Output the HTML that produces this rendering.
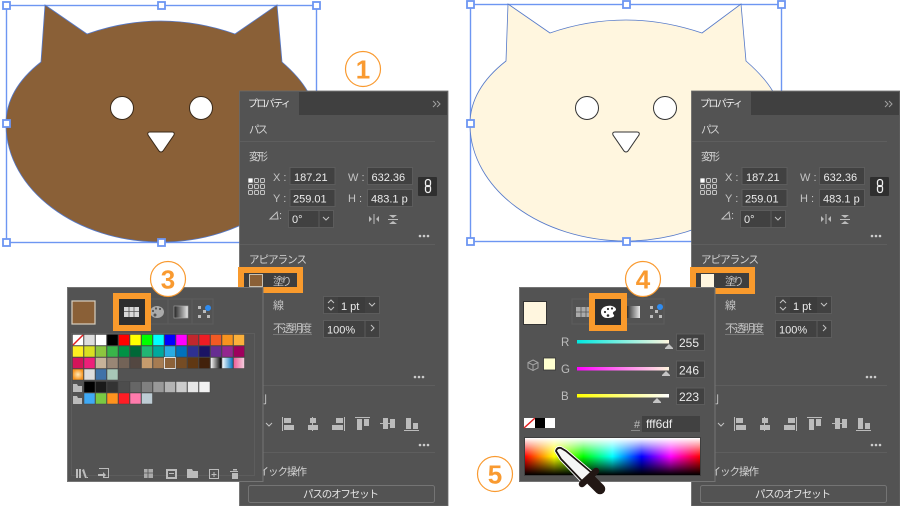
<!DOCTYPE html>
<html lang="ja">
<head>
<meta charset="utf-8">
<title>Illustrator</title>
<style>
html,body{margin:0;padding:0;background:#fff;width:900px;height:506px;overflow:hidden}
svg{display:block;filter:blur(.3px)}
text{font-family:"Liberation Sans","Noto Sans CJK JP",sans-serif}
.h{font-size:10.5px;fill:#d4d4d4}
.l{font-size:11px;fill:#c4c4c4}
.v{font-size:11px;fill:#ececec}
.f{fill:#414141;stroke:#5c5c5c;stroke-width:1}
.ic{fill:#bbb}
.st{fill:none;stroke:#c4c4c4;stroke-width:1}
.n{font-size:26px;font-weight:bold;fill:#f99a30;text-anchor:middle}
.ci{fill:#fff;stroke:#f99a30;stroke-width:1.2}
.sep{stroke:#5e5e5e;stroke-width:1}
</style>
</head>
<body>
<svg width="900" height="506" viewBox="0 0 900 506" xmlns="http://www.w3.org/2000/svg">
<defs>
<linearGradient id="hue"><stop offset="0" stop-color="#f00"/><stop offset=".167" stop-color="#ff0"/><stop offset=".333" stop-color="#0f0"/><stop offset=".5" stop-color="#0ff"/><stop offset=".667" stop-color="#00f"/><stop offset=".833" stop-color="#f0f"/><stop offset="1" stop-color="#f00"/></linearGradient>
<linearGradient id="wb" x2="0" y2="1"><stop offset="0" stop-color="#fff"/><stop offset=".5" stop-color="#fff" stop-opacity="0"/><stop offset=".5" stop-color="#000" stop-opacity="0"/><stop offset="1" stop-color="#000"/></linearGradient>
<linearGradient id="bw"><stop offset="0" stop-color="#fff"/><stop offset="1" stop-color="#000"/></linearGradient>
<linearGradient id="gb"><stop offset="0" stop-color="#222"/><stop offset="1" stop-color="#e8e8e8"/></linearGradient>
<linearGradient id="bl"><stop offset="0" stop-color="#fff"/><stop offset="1" stop-color="#0071bc"/></linearGradient>
<linearGradient id="pk"><stop offset="0" stop-color="#ed5d98"/><stop offset="1" stop-color="#f5d0e0"/></linearGradient>
<radialGradient id="og"><stop offset="0" stop-color="#ffe9b8"/><stop offset="1" stop-color="#f7931e"/></radialGradient>
<linearGradient id="r"><stop offset="0" stop-color="#00e8e0"/><stop offset="1" stop-color="#fff6df"/></linearGradient>
<linearGradient id="g"><stop offset="0" stop-color="#f0f"/><stop offset="1" stop-color="#fff6df"/></linearGradient>
<linearGradient id="b"><stop offset="0" stop-color="#ff0"/><stop offset="1" stop-color="#fff"/></linearGradient>
</defs>

<!-- LEFT CAT -->
<rect x="6.5" y="5.5" width="310" height="237" fill="none" stroke="#6d96f2" stroke-width="1.4"/>
<path d="M45 5 L87 34 Q124 21 161 21 Q198 21 235 34 L277 5 L282 62 C305 82 316 100 316 124 C316 190 245 242 161 242 C77 242 6 190 6 124 C6 100 18 80 41 62 Z" fill="#8a6037" stroke="#5579c9" stroke-width=".8"/>
<circle cx="122" cy="108" r="11.5" fill="#fff" stroke="#3a2a1a"/>
<circle cx="201" cy="108" r="11.5" fill="#fff" stroke="#3a2a1a"/>
<path d="M150 132 H172 Q175 132 174 135 L163 151 Q161 153 159 151 L148 135 Q147 132 150 132Z" fill="#fff" stroke="#3a2a1a"/>
<g fill="#fff" stroke="#6d96f2" stroke-width="1.8">
<rect x="3" y="2" width="7" height="7"/><rect x="158" y="2" width="7" height="7"/><rect x="313" y="2" width="7" height="7"/>
<rect x="3" y="120" width="7" height="7"/><rect x="3" y="239" width="7" height="7"/><rect x="158" y="239" width="7" height="7"/>
</g>

<!-- RIGHT CAT -->
<rect x="470.5" y="4.5" width="311" height="237" fill="none" stroke="#6d96f2" stroke-width="1.4"/>
<path d="M508 4 L550 33 Q587 20 626 20 Q663 20 702 33 L741 4 L746 61 C769 81 782 100 782 124 C782 190 710 241 626 241 C542 241 470 190 470 124 C470 100 483 79 506 61 Z" fill="#fff6df" stroke="#5579c9" stroke-width=".8"/>
<circle cx="587" cy="108" r="11.5" fill="#fff" stroke="#333"/>
<circle cx="665" cy="108" r="11.5" fill="#fff" stroke="#333"/>
<path d="M615 132 H637 Q640 132 639 135 L628 151 Q626 153 624 151 L613 135 Q612 132 615 132Z" fill="#fff" stroke="#333"/>
<g fill="#fff" stroke="#6d96f2" stroke-width="1.8">
<rect x="467" y="1" width="7" height="7"/><rect x="623" y="1" width="7" height="7"/><rect x="778" y="1" width="7" height="7"/>
<rect x="467" y="120" width="7" height="7"/><rect x="467" y="238" width="7" height="7"/><rect x="623" y="238" width="7" height="7"/>
</g>

<!-- LEFT PROPERTIES PANEL -->
<g>
<rect x="239.500" y="91" width="208.500" height="415" fill="#535353" stroke="#6a6a6a" stroke-width=".8"/>
<rect x="240" y="92" width="207" height="23" fill="#404040"/>
<rect x="240" y="92" width="59" height="23" fill="#535353"/>
<text x="248" y="107" font-size="10" fill="#f0f0f0" textLength="43">プロパティ</text>
<path d="M433 101 l3 3 l-3 3 M437 101 l3 3 l-3 3" fill="none" stroke="#a0a0a0"/>
<text x="249" y="133" class="h" textLength="19">パス</text>
<line x1="240" y1="141.500" x2="435" y2="141.500" class="sep"/>
<text x="249" y="160" class="h" textLength="19">変形</text>
<g class="st" stroke-width=".9"><rect x="248.500" y="178.500" width="4" height="4" rx="1" fill="#fff"/><rect x="254.500" y="178.500" width="4" height="4" rx="1"/><rect x="260.500" y="178.500" width="4" height="4" rx="1"/><rect x="248.500" y="184.500" width="4" height="4" rx="1"/><rect x="254.500" y="184.500" width="4" height="4" rx="1"/><rect x="260.500" y="184.500" width="4" height="4" rx="1"/><rect x="248.500" y="190.500" width="4" height="4" rx="1"/><rect x="254.500" y="190.500" width="4" height="4" rx="1"/><rect x="260.500" y="190.500" width="4" height="4" rx="1"/></g>
<text x="273" y="181" class="l">X :</text>
<rect x="290" y="167.500" width="45" height="17" class="f"/><text x="294" y="181" class="v">187.21</text>
<text x="348" y="181" class="l">W :</text>
<rect x="367.500" y="167.500" width="45" height="17" class="f"/><text x="371.500" y="181" class="v">632.36</text>
<rect x="418" y="177" width="19" height="19" rx="1" fill="#2f2f2f"/>
<path d="M425.500 182a2.500 2.500 0 0 1 5 0v2a2.500 2.500 0 0 1-5 0zM425.500 188a2.500 2.500 0 0 1 5 0v2a2.500 2.500 0 0 1-5 0z" fill="none" stroke="#eee" stroke-width="1.300"/>
<text x="273" y="202" class="l">Y :</text>
<rect x="290" y="189.500" width="45" height="17" class="f"/><text x="293" y="202.500" class="v">259.01</text>
<text x="348" y="202" class="l">H :</text>
<rect x="367.500" y="189.500" width="45" height="17" class="f"/><text x="371" y="202.500" class="v">483.1 p</text>
<path d="M270 219 L277 212 L278 219 Z" class="st"/><text x="279" y="219" class="l" font-size="9">:</text>
<rect x="288.500" y="210.500" width="45" height="17" class="f"/><line x1="319" y1="211" x2="319" y2="227" stroke="#5c5c5c"/>
<text x="292" y="223" class="v">0°</text><path d="M323 217 l3 3 l3-3" class="st"/>
<path d="M369 216 l3 3 l-3 3z M379 216 l-3 3 l3 3z" fill="#bbb"/><line x1="374" y1="214" x2="374" y2="224" stroke="#bbb"/>
<path d="M389 215 h8 l-4 3z M389 224 h8 l-4-3z" fill="#bbb"/><line x1="388" y1="219.500" x2="398" y2="219.500" stroke="#bbb"/>
<g fill="#ccc"><circle cx="420" cy="236" r="1.300"/><circle cx="424" cy="236" r="1.300"/><circle cx="428" cy="236" r="1.300"/></g>
<line x1="240" y1="244.500" x2="435" y2="244.500" class="sep"/>
<text x="249" y="263" class="h" textLength="58">アピアランス</text>
<rect x="241" y="270" width="59" height="20" fill="none" stroke="#f99a2c" stroke-width="6"/>
<rect x="244" y="273" width="53" height="14" fill="#3e3e3e"/>
<rect x="249.500" y="274.500" width="13" height="12" fill="#8a6037" stroke="#c9c0b0"/>
<text x="273" y="285" class="l" font-size="10.500" textLength="19">塗り</text>
<path d="M249 298 h8 M249 301 h8" class="st"/>
<text x="273" y="309" class="l" font-size="10">線</text>
<rect x="323.500" y="296.500" width="56" height="17" class="f"/><rect x="338" y="297" width="27" height="16" fill="#3c3c3c"/>
<path d="M328 303 l3-3 l3 3 M328 307 l3 3 l3-3" class="st"/><text x="341" y="310" class="v">1 pt</text><path d="M369 303 l3 3 l3-3" class="st"/>
<text x="273" y="332" class="l" font-size="10" textLength="39">不透明度</text><line x1="273" y1="334.500" x2="312" y2="334.500" stroke="#777"/>
<rect x="323.500" y="320.500" width="56" height="17" class="f"/><line x1="365" y1="321" x2="365" y2="337" stroke="#5c5c5c"/>
<text x="327" y="333.500" class="v">100%</text><path d="M371 325 l3 3 l-3 3" class="st"/>
<g fill="#ccc"><circle cx="415" cy="377" r="1.300"/><circle cx="419" cy="377" r="1.300"/><circle cx="423" cy="377" r="1.300"/></g>
<line x1="240" y1="385.500" x2="435" y2="385.500" class="sep"/>
<text x="249" y="403" class="h" textLength="18">整列</text>
<path d="M266 423 l3 3 l3-3" class="st"/>
<g fill="#bbb">
<rect x="282" y="417" width="1" height="14"/><rect x="284" y="418" width="7" height="5"/><rect x="284" y="425" width="10" height="5"/>
<rect x="312" y="417" width="1" height="14"/><rect x="310" y="418" width="6" height="5"/><rect x="308" y="425" width="10" height="5"/>
<rect x="344" y="417" width="1" height="14"/><rect x="336" y="418" width="7" height="5"/><rect x="332" y="425" width="11" height="5"/>
<rect x="355" y="417" width="15" height="1"/><rect x="357" y="419" width="5" height="11"/><rect x="364" y="419" width="5" height="7"/>
<rect x="380" y="423" width="15" height="1"/><rect x="383" y="418" width="5" height="11"/><rect x="390" y="419" width="5" height="9"/>
<rect x="404" y="430" width="15" height="1"/><rect x="406" y="418" width="5" height="11"/><rect x="413" y="423" width="5" height="6"/>
</g>
<g fill="#ccc"><circle cx="420" cy="445" r="1.300"/><circle cx="424" cy="445" r="1.300"/><circle cx="428" cy="445" r="1.300"/></g>
<line x1="240" y1="452.500" x2="435" y2="452.500" class="sep"/>
<text x="249" y="475" class="h" textLength="58">クイック操作</text>
<rect x="248.500" y="485.500" width="186" height="17" rx="2" fill="#535353" stroke="#747474"/>
<text x="303" y="497.500" font-size="10.500" fill="#e4e4e4" textLength="76">パスのオフセット</text>
</g>

<!-- RIGHT PROPERTIES PANEL -->
<g transform="translate(452,0)">
<rect x="239.500" y="91" width="208.500" height="415" fill="#535353" stroke="#6a6a6a" stroke-width=".8"/>
<rect x="240" y="92" width="207" height="23" fill="#404040"/>
<rect x="240" y="92" width="59" height="23" fill="#535353"/>
<text x="248" y="107" font-size="10" fill="#f0f0f0" textLength="43">プロパティ</text>
<path d="M433 101 l3 3 l-3 3 M437 101 l3 3 l-3 3" fill="none" stroke="#a0a0a0"/>
<text x="249" y="133" class="h" textLength="19">パス</text>
<line x1="240" y1="141.500" x2="435" y2="141.500" class="sep"/>
<text x="249" y="160" class="h" textLength="19">変形</text>
<g class="st" stroke-width=".9"><rect x="248.500" y="178.500" width="4" height="4" rx="1" fill="#fff"/><rect x="254.500" y="178.500" width="4" height="4" rx="1"/><rect x="260.500" y="178.500" width="4" height="4" rx="1"/><rect x="248.500" y="184.500" width="4" height="4" rx="1"/><rect x="254.500" y="184.500" width="4" height="4" rx="1"/><rect x="260.500" y="184.500" width="4" height="4" rx="1"/><rect x="248.500" y="190.500" width="4" height="4" rx="1"/><rect x="254.500" y="190.500" width="4" height="4" rx="1"/><rect x="260.500" y="190.500" width="4" height="4" rx="1"/></g>
<text x="273" y="181" class="l">X :</text>
<rect x="290" y="167.500" width="45" height="17" class="f"/><text x="294" y="181" class="v">187.21</text>
<text x="348" y="181" class="l">W :</text>
<rect x="367.500" y="167.500" width="45" height="17" class="f"/><text x="371.500" y="181" class="v">632.36</text>
<rect x="418" y="177" width="19" height="19" rx="1" fill="#2f2f2f"/>
<path d="M425.500 182a2.500 2.500 0 0 1 5 0v2a2.500 2.500 0 0 1-5 0zM425.500 188a2.500 2.500 0 0 1 5 0v2a2.500 2.500 0 0 1-5 0z" fill="none" stroke="#eee" stroke-width="1.300"/>
<text x="273" y="202" class="l">Y :</text>
<rect x="290" y="189.500" width="45" height="17" class="f"/><text x="293" y="202.500" class="v">259.01</text>
<text x="348" y="202" class="l">H :</text>
<rect x="367.500" y="189.500" width="45" height="17" class="f"/><text x="371" y="202.500" class="v">483.1 p</text>
<path d="M270 219 L277 212 L278 219 Z" class="st"/><text x="279" y="219" class="l" font-size="9">:</text>
<rect x="288.500" y="210.500" width="45" height="17" class="f"/><line x1="319" y1="211" x2="319" y2="227" stroke="#5c5c5c"/>
<text x="292" y="223" class="v">0°</text><path d="M323 217 l3 3 l3-3" class="st"/>
<path d="M369 216 l3 3 l-3 3z M379 216 l-3 3 l3 3z" fill="#bbb"/><line x1="374" y1="214" x2="374" y2="224" stroke="#bbb"/>
<path d="M389 215 h8 l-4 3z M389 224 h8 l-4-3z" fill="#bbb"/><line x1="388" y1="219.500" x2="398" y2="219.500" stroke="#bbb"/>
<g fill="#ccc"><circle cx="420" cy="236" r="1.300"/><circle cx="424" cy="236" r="1.300"/><circle cx="428" cy="236" r="1.300"/></g>
<line x1="240" y1="244.500" x2="435" y2="244.500" class="sep"/>
<text x="249" y="263" class="h" textLength="58">アピアランス</text>
<rect x="241" y="270" width="59" height="21" fill="none" stroke="#f99a2c" stroke-width="6"/>
<rect x="244" y="273" width="53" height="15" fill="#3e3e3e"/>
<rect x="249" y="274" width="13" height="13" fill="#fff6df"/>
<text x="273" y="285" class="l" font-size="10.500" textLength="19">塗り</text>
<path d="M249 298 h8 M249 301 h8" class="st"/>
<text x="273" y="309" class="l" font-size="10">線</text>
<rect x="323.500" y="296.500" width="56" height="17" class="f"/><rect x="338" y="297" width="27" height="16" fill="#3c3c3c"/>
<path d="M328 303 l3-3 l3 3 M328 307 l3 3 l3-3" class="st"/><text x="341" y="310" class="v">1 pt</text><path d="M369 303 l3 3 l3-3" class="st"/>
<text x="273" y="332" class="l" font-size="10" textLength="39">不透明度</text><line x1="273" y1="334.500" x2="312" y2="334.500" stroke="#777"/>
<rect x="323.500" y="320.500" width="56" height="17" class="f"/><line x1="365" y1="321" x2="365" y2="337" stroke="#5c5c5c"/>
<text x="327" y="333.500" class="v">100%</text><path d="M371 325 l3 3 l-3 3" class="st"/>
<g fill="#ccc"><circle cx="415" cy="377" r="1.300"/><circle cx="419" cy="377" r="1.300"/><circle cx="423" cy="377" r="1.300"/></g>
<line x1="240" y1="385.500" x2="435" y2="385.500" class="sep"/>
<text x="249" y="403" class="h" textLength="18">整列</text>
<path d="M266 423 l3 3 l3-3" class="st"/>
<g fill="#bbb">
<rect x="282" y="417" width="1" height="14"/><rect x="284" y="418" width="7" height="5"/><rect x="284" y="425" width="10" height="5"/>
<rect x="312" y="417" width="1" height="14"/><rect x="310" y="418" width="6" height="5"/><rect x="308" y="425" width="10" height="5"/>
<rect x="344" y="417" width="1" height="14"/><rect x="336" y="418" width="7" height="5"/><rect x="332" y="425" width="11" height="5"/>
<rect x="355" y="417" width="15" height="1"/><rect x="357" y="419" width="5" height="11"/><rect x="364" y="419" width="5" height="7"/>
<rect x="380" y="423" width="15" height="1"/><rect x="383" y="418" width="5" height="11"/><rect x="390" y="419" width="5" height="9"/>
<rect x="404" y="430" width="15" height="1"/><rect x="406" y="418" width="5" height="11"/><rect x="413" y="423" width="5" height="6"/>
</g>
<g fill="#ccc"><circle cx="420" cy="445" r="1.300"/><circle cx="424" cy="445" r="1.300"/><circle cx="428" cy="445" r="1.300"/></g>
<line x1="240" y1="452.500" x2="435" y2="452.500" class="sep"/>
<text x="249" y="475" class="h" textLength="58">クイック操作</text>
<rect x="248.500" y="485.500" width="186" height="17" rx="2" fill="#535353" stroke="#747474"/>
<text x="303" y="497.500" font-size="10.500" fill="#e4e4e4" textLength="76">パスのオフセット</text>
</g>

<!-- SWATCHES POPUP -->
<rect x="67.500" y="287.500" width="195.500" height="194" fill="#535353" stroke="#757575"/>
<rect x="72" y="301" width="23" height="23" fill="#8a6037" stroke="#d8cfc0" stroke-width="1.200"/>
<rect x="145" y="299" width="68" height="25" fill="none" stroke="#5d5d5d"/>
<line x1="168" y1="299" x2="168" y2="324" stroke="#5d5d5d"/><line x1="192" y1="299" x2="192" y2="324" stroke="#5d5d5d"/>
<rect x="116" y="296" width="32" height="32" fill="#2f2f2f" stroke="#f99a2c" stroke-width="6"/>
<rect x="124" y="307" width="15" height="10" fill="#d8d8d8"/>
<path d="M129 307 v10 M134 307 v10 M124 311.500 h15" stroke="#555" stroke-width=".8"/>
<ellipse cx="157" cy="312" rx="7" ry="6" fill="#aaa"/>
<g fill="#535353"><circle cx="153" cy="311" r="1.100"/><circle cx="156" cy="308.500" r="1.100"/><circle cx="160" cy="309" r="1.100"/><circle cx="155" cy="315" r="1.500"/></g>
<rect x="174" y="306" width="14" height="12" fill="url(#gb)" stroke="#aaa" stroke-width=".6"/>
<g fill="#bbb"><rect x="198" y="306" width="3" height="3"/><rect x="203" y="310" width="3" height="3"/><rect x="198" y="315" width="3" height="3"/><rect x="207" y="315" width="3" height="3"/></g><circle cx="208" cy="308" r="3" fill="#2f8cf0"/>
<rect x="71.500" y="333.500" width="183" height="142" fill="none" stroke="#5d5d5d"/>
<g stroke="#444" stroke-width=".5">
<rect x="72.500" y="334.500" width="11" height="11" fill="#fff"/><line x1="73" y1="345" x2="83" y2="335" stroke="#e02020" stroke-width="1.500"/>
<rect x="84" y="334.500" width="11" height="11" fill="#ddd"/>
<rect x="95.500" y="334.500" width="11" height="11" fill="#fff"/><rect x="107" y="334.500" width="11" height="11" fill="#000"/><rect x="118.500" y="334.500" width="11" height="11" fill="#f00"/><rect x="130" y="334.500" width="11" height="11" fill="#ff0"/><rect x="141.500" y="334.500" width="11" height="11" fill="#0f0"/><rect x="153" y="334.500" width="11" height="11" fill="#0ff"/><rect x="164.500" y="334.500" width="11" height="11" fill="#00f"/><rect x="176" y="334.500" width="11" height="11" fill="#f0f"/><rect x="187.500" y="334.500" width="11" height="11" fill="#c1272d"/><rect x="199" y="334.500" width="11" height="11" fill="#ed1c24"/><rect x="210.500" y="334.500" width="11" height="11" fill="#f15a24"/><rect x="222" y="334.500" width="11" height="11" fill="#f7931e"/><rect x="233.500" y="334.500" width="11" height="11" fill="#fbb03b"/>
<rect x="72.500" y="346" width="11" height="11" fill="#fcee21"/><rect x="84" y="346" width="11" height="11" fill="#d9e021"/><rect x="95.500" y="346" width="11" height="11" fill="#8cc63f"/><rect x="107" y="346" width="11" height="11" fill="#39b54a"/><rect x="118.500" y="346" width="11" height="11" fill="#009245"/><rect x="130" y="346" width="11" height="11" fill="#006837"/><rect x="141.500" y="346" width="11" height="11" fill="#22b573"/><rect x="153" y="346" width="11" height="11" fill="#00a99d"/><rect x="164.500" y="346" width="11" height="11" fill="#29abe2"/><rect x="176" y="346" width="11" height="11" fill="#0071bc"/><rect x="187.500" y="346" width="11" height="11" fill="#2e3192"/><rect x="199" y="346" width="11" height="11" fill="#1b1464"/><rect x="210.500" y="346" width="11" height="11" fill="#662d91"/><rect x="222" y="346" width="11" height="11" fill="#93278f"/><rect x="233.500" y="346" width="11" height="11" fill="#9e005d"/>
<rect x="72.500" y="357.500" width="11" height="11" fill="#d4145a"/><rect x="84" y="357.500" width="11" height="11" fill="#ed1e79"/><rect x="95.500" y="357.500" width="11" height="11" fill="#c7b299"/><rect x="107" y="357.500" width="11" height="11" fill="#998675"/><rect x="118.500" y="357.500" width="11" height="11" fill="#736357"/><rect x="130" y="357.500" width="11" height="11" fill="#534741"/><rect x="141.500" y="357.500" width="11" height="11" fill="#c69c6d"/><rect x="153" y="357.500" width="11" height="11" fill="#a67c52"/><rect x="164.500" y="357.500" width="11" height="11" fill="#8c6239" stroke="#e0e0e0" stroke-width="1"/><rect x="176" y="357.500" width="11" height="11" fill="#754c24"/><rect x="187.500" y="357.500" width="11" height="11" fill="#603813"/><rect x="199" y="357.500" width="11" height="11" fill="#42210b"/><rect x="210.500" y="357.500" width="11" height="11" fill="url(#bw)"/><rect x="222" y="357.500" width="11" height="11" fill="url(#bl)"/><rect x="233.500" y="357.500" width="11" height="11" fill="url(#pk)"/>
<rect x="72.500" y="369" width="11" height="11" fill="url(#og)"/><rect x="84" y="369" width="11" height="11" fill="#ddd"/><rect x="95.500" y="369" width="11" height="11" fill="#3f72a8"/><rect x="107" y="369" width="11" height="11" fill="#a8c8b8"/>
<rect x="84" y="381.500" width="11" height="11" fill="#000"/><rect x="95.500" y="381.500" width="11" height="11" fill="#1a1a1a"/><rect x="107" y="381.500" width="11" height="11" fill="#333"/><rect x="118.500" y="381.500" width="11" height="11" fill="#4d4d4d"/><rect x="130" y="381.500" width="11" height="11" fill="#666"/><rect x="141.500" y="381.500" width="11" height="11" fill="#808080"/><rect x="153" y="381.500" width="11" height="11" fill="#999"/><rect x="164.500" y="381.500" width="11" height="11" fill="#b3b3b3"/><rect x="176" y="381.500" width="11" height="11" fill="#ccc"/><rect x="187.500" y="381.500" width="11" height="11" fill="#e6e6e6"/><rect x="199" y="381.500" width="11" height="11" fill="#f2f2f2"/>
<rect x="84" y="393" width="11" height="11" fill="#3fa9f5"/><rect x="95.500" y="393" width="11" height="11" fill="#7ac943"/><rect x="107" y="393" width="11" height="11" fill="#ff931e"/><rect x="118.500" y="393" width="11" height="11" fill="#ff1d25"/><rect x="130" y="393" width="11" height="11" fill="#ff7bac"/><rect x="141.500" y="393" width="11" height="11" fill="#bdccd4"/>
</g>
<path d="M73 384 h4 l1 2 h4 v6 h-9z M73 396 h4 l1 2 h4 v6 h-9z" fill="#bbb"/>
<g class="ic">
<path d="M76 469 h2 v9 h-2z M79 469 h2 v9 h-2z M82 470 l2-1 l3 9 h-2z M87 477 h1 v1 h-1z"/>
<path d="M99 468 h10 v10 h-6 v-1 h5 v-8 h-9z M98 474 h5 v-2 l3 3 l-3 3 v-2 h-5z"/>
<path d="M144 469 h9 v9 h-9z" fill="#aaa"/><path d="M148 469 v9 M144 473 h9" stroke="#535353" stroke-width=".8"/>
<path d="M166 469 h11 v10 h-11z M168 471 v6 h7 v-6z" fill-rule="evenodd"/><rect x="169" y="473" width="5" height="1"/>
<path d="M187 469 h5 l1 2 h5 v7 h-11z"/>
<path d="M209 469 h10 v10 h-10z M210 470 v8 h8 v-8z" fill-rule="evenodd"/><path d="M213.500 472 h1 v2 h2 v1 h-2 v2 h-1 v-2 h-2 v-1 h2z"/>
<path d="M231 471 h8 v1 h-8z M233 473 h6 v6 h-6z" transform="translate(-1,0)"/><rect x="233" y="469" width="4" height="1.500"/>
</g>

<!-- COLOR POPUP -->
<rect x="519.500" y="287.500" width="195.500" height="194" fill="#535353" stroke="#757575"/>
<rect x="523.500" y="301.500" width="23" height="23" fill="#fff6df" stroke="#333"/>
<rect x="572" y="299" width="92" height="25" fill="none" stroke="#5d5d5d"/>
<rect x="576" y="307" width="14" height="10" fill="#aaa"/><path d="M581 307 v10 M586 307 v10 M576 312 h14" stroke="#555" stroke-width=".8"/>
<rect x="626" y="306" width="14" height="12" fill="url(#gb)"/>
<g fill="#bbb"><rect x="650" y="306" width="3" height="3"/><rect x="655" y="310" width="3" height="3"/><rect x="650" y="315" width="3" height="3"/><rect x="659" y="315" width="3" height="3"/></g><circle cx="660" cy="307" r="3" fill="#2f8cf0"/>
<rect x="592" y="296" width="32" height="32" fill="#2f2f2f" stroke="#f99a2c" stroke-width="6"/>
<path d="M601 312 C601 307 607 305 612 306 C616 307 617 310 615 311 C613 312 612 313 614 315 C615 317 611 318 607 318 C603 318 601 315 601 312Z" fill="#fff"/>
<g fill="#2f2f2f"><circle cx="605" cy="312" r="1.100"/><circle cx="608" cy="309" r="1.100"/><circle cx="612" cy="308.500" r="1.100"/><circle cx="608" cy="315.500" r="1.300"/></g>
<text x="561" y="346" font-size="11.500" fill="#bdbdbd">R</text><text x="561" y="373" font-size="11.500" fill="#bdbdbd">G</text><text x="561" y="400" font-size="11.500" fill="#bdbdbd">B</text>
<rect x="577" y="340" width="92" height="3.500" fill="url(#r)"/>
<rect x="577" y="367" width="92" height="3.500" fill="url(#g)"/>
<rect x="577" y="394" width="92" height="3.500" fill="url(#b)"/>
<path d="M669 344 l4 4 v1 h-8 v-1z M666 371 l4 4 v1 h-8 v-1z M657 398 l4 4 v1 h-8 v-1z" fill="#c4c4c4"/>
<rect x="676.500" y="334" width="28" height="16.500" class="f"/><text x="679" y="347" fill="#ececec" font-size="12">255</text>
<rect x="676.500" y="361" width="28" height="16.500" class="f"/><text x="679" y="374.500" fill="#ececec" font-size="12">246</text>
<rect x="676.500" y="388" width="28" height="16.500" class="f"/><text x="679" y="401" fill="#ececec" font-size="12">223</text>
<path d="M533 360 l5 2.500 v5.500 l-5 2.500 l-5-2.500 v-5.500z M528 362.500 l5 2.500 l5-2.500 M533 365 v6" fill="none" stroke="#a5a5a5"/>
<rect x="543.500" y="358" width="12" height="12" fill="#ffffcf" stroke="#333" stroke-width=".8"/>
<rect x="524" y="418" width="11" height="10" fill="#fff"/><line x1="524" y1="428" x2="535" y2="418" stroke="#e02020" stroke-width="1.500"/>
<rect x="535" y="418" width="10" height="10" fill="#000"/><rect x="545" y="418" width="10" height="10" fill="#fff"/>
<text x="634" y="428" font-size="11" fill="#bdbdbd">#</text><line x1="631" y1="430.500" x2="640" y2="430.500" stroke="#888"/>
<rect x="642" y="416" width="58" height="16" fill="#414141"/><text x="646" y="428" fill="#ececec" font-size="12">fff6df</text>
<rect x="525" y="438" width="175" height="37" fill="url(#hue)"/>
<rect x="525" y="438" width="175" height="37" fill="url(#wb)"/>
<rect x="524.500" y="437.500" width="176" height="38" fill="none" stroke="#333" stroke-width=".6"/>
<path d="M556 451 Q557 447 561 448 L566 451 L592 473 L583 482 L561 459 Z" fill="#f5f5f5" stroke="#fff" stroke-width="3.500" stroke-linejoin="round"/>
<path d="M556 451 Q557 447 561 448 L566 451 L592 473 L583 482 L561 459 Z" fill="#f5f5f5" stroke="#1a1210" stroke-width="1.800" stroke-linejoin="round"/>
<path d="M582 484 L596 471" fill="none" stroke="#221714" stroke-width="6.500" stroke-linecap="round"/>
<path d="M591 480 L600 489" fill="none" stroke="#221714" stroke-width="10.500" stroke-linecap="round"/>

<!-- NUMBERS -->
<circle cx="363" cy="69" r="17.500" class="ci"/><text x="363" y="78.500" class="n">1</text>
<circle cx="168" cy="279" r="17.500" class="ci"/><text x="168" y="288.500" class="n">3</text>
<circle cx="643" cy="279" r="17.500" class="ci"/><text x="643" y="288.500" class="n">4</text>
<circle cx="495" cy="474" r="17.500" class="ci"/><text x="495" y="483.500" class="n">5</text>
<rect x="116" y="296" width="32" height="32" fill="none" stroke="#f99a2c" stroke-width="6"/>
<rect x="592" y="296" width="32" height="32" fill="none" stroke="#f99a2c" stroke-width="6"/>
</svg>
</body>
</html>
